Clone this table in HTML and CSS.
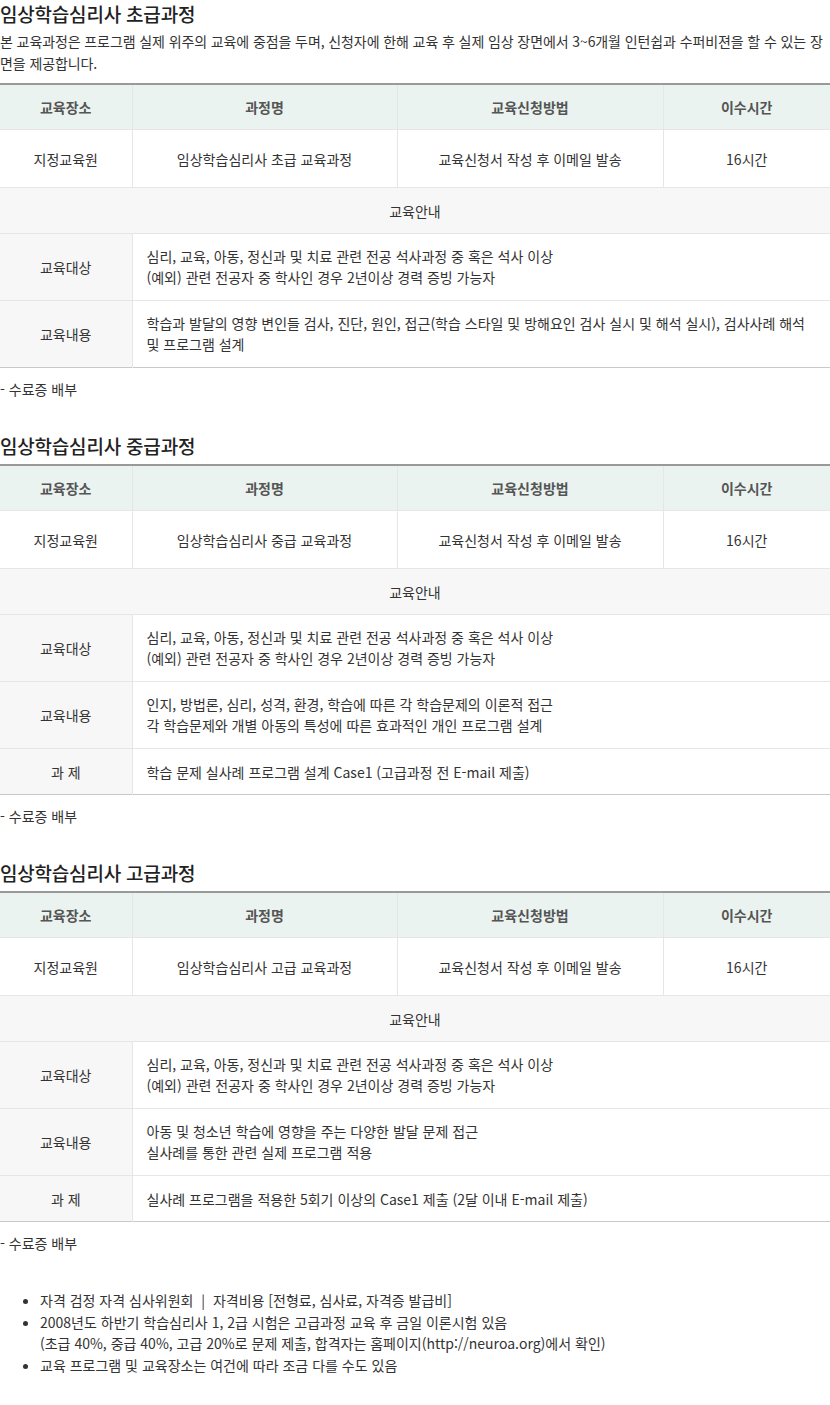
FILE: index.html
```html
<!DOCTYPE html>
<html lang="ko">
<head>
<meta charset="utf-8">
<title>임상학습심리사 교육과정</title>
<link rel="stylesheet" href="styles.css">
</head>
<body>
<section class="course">
  <h2 class="course-title">임상학습심리사 초급과정</h2>
  <p class="course-desc">본 교육과정은 프로그램 실제 위주의 교육에 중점을 두며, 신청자에 한해 교육 후 실제 임상 장면에서 3~6개월 인턴쉽과 수퍼비젼을 할 수 있는 장면을 제공합니다.</p>
  <table class="course-table">
    <colgroup><col class="c1"><col class="c2"><col class="c3"><col class="c4"></colgroup>
    <thead>
      <tr><th>교육장소</th><th>과정명</th><th>교육신청방법</th><th>이수시간</th></tr>
    </thead>
    <tbody>
      <tr class="row-data"><td>지정교육원</td><td>임상학습심리사 초급 교육과정</td><td>교육신청서 작성 후 이메일 발송</td><td>16시간</td></tr>
      <tr class="row-guide"><td colspan="4">교육안내</td></tr>
      <tr class="row-info"><td class="label">교육대상</td><td colspan="3" class="text">심리, 교육, 아동, 정신과 및 치료 관련 전공 석사과정 중 혹은 석사 이상<br>(예외) 관련 전공자 중 학사인 경우 2년이상 경력 증빙 가능자</td></tr>
      <tr class="row-info"><td class="label">교육내용</td><td colspan="3" class="text">학습과 발달의 영향 변인들 검사, 진단, 원인, 접근(학습 스타일 및 방해요인 검사 실시 및 해석 실시), 검사사례 해석 및 프로그램 설계</td></tr>
    </tbody>
  </table>
  <p class="course-note">- 수료증 배부</p>
</section>

<section class="course">
  <h2 class="course-title">임상학습심리사 중급과정</h2>
  <table class="course-table">
    <colgroup><col class="c1"><col class="c2"><col class="c3"><col class="c4"></colgroup>
    <thead>
      <tr><th>교육장소</th><th>과정명</th><th>교육신청방법</th><th>이수시간</th></tr>
    </thead>
    <tbody>
      <tr class="row-data"><td>지정교육원</td><td>임상학습심리사 중급 교육과정</td><td>교육신청서 작성 후 이메일 발송</td><td>16시간</td></tr>
      <tr class="row-guide"><td colspan="4">교육안내</td></tr>
      <tr class="row-info"><td class="label">교육대상</td><td colspan="3" class="text">심리, 교육, 아동, 정신과 및 치료 관련 전공 석사과정 중 혹은 석사 이상<br>(예외) 관련 전공자 중 학사인 경우 2년이상 경력 증빙 가능자</td></tr>
      <tr class="row-info"><td class="label">교육내용</td><td colspan="3" class="text">인지, 방법론, 심리, 성격, 환경, 학습에 따른 각 학습문제의 이론적 접근<br>각 학습문제와 개별 아동의 특성에 따른 효과적인 개인 프로그램 설계</td></tr>
      <tr class="row-task"><td class="label">과 제</td><td colspan="3" class="text">학습 문제 실사례 프로그램 설계 Case1 (고급과정 전 E-mail 제출)</td></tr>
    </tbody>
  </table>
  <p class="course-note">- 수료증 배부</p>
</section>

<section class="course">
  <h2 class="course-title">임상학습심리사 고급과정</h2>
  <table class="course-table">
    <colgroup><col class="c1"><col class="c2"><col class="c3"><col class="c4"></colgroup>
    <thead>
      <tr><th>교육장소</th><th>과정명</th><th>교육신청방법</th><th>이수시간</th></tr>
    </thead>
    <tbody>
      <tr class="row-data"><td>지정교육원</td><td>임상학습심리사 고급 교육과정</td><td>교육신청서 작성 후 이메일 발송</td><td>16시간</td></tr>
      <tr class="row-guide"><td colspan="4">교육안내</td></tr>
      <tr class="row-info"><td class="label">교육대상</td><td colspan="3" class="text">심리, 교육, 아동, 정신과 및 치료 관련 전공 석사과정 중 혹은 석사 이상<br>(예외) 관련 전공자 중 학사인 경우 2년이상 경력 증빙 가능자</td></tr>
      <tr class="row-info"><td class="label">교육내용</td><td colspan="3" class="text">아동 및 청소년 학습에 영향을 주는 다양한 발달 문제 접근<br>실사례를 통한 관련 실제 프로그램 적용</td></tr>
      <tr class="row-task"><td class="label">과 제</td><td colspan="3" class="text">실사례 프로그램을 적용한 5회기 이상의 Case1 제출 (2달 이내 E-mail 제출)</td></tr>
    </tbody>
  </table>
  <p class="course-note">- 수료증 배부</p>
</section>

<ul class="notice">
  <li>자격 검정 자격 심사위원회 &nbsp;|&nbsp; 자격비용 [전형료, 심사료, 자격증 발급비]</li>
  <li>2008년도 하반기 학습심리사 1, 2급 시험은 고급과정 교육 후 금일 이론시험 있음<br>(초급 40%, 중급 40%, 고급 20%로 문제 제출, 합격자는 홈페이지(http://neuroa.org)에서 확인)</li>
  <li>교육 프로그램 및 교육장소는 여건에 따라 조금 다를 수도 있음</li>
</ul>
</body>
</html>
```

FILE: styles.css
```css
html, body {
  margin: 0;
  padding: 0;
  background: #fff;
}
body {
  width: 830px;
  font-family: "Noto Sans CJK KR", "Noto Sans", sans-serif;
  font-size: 14px;
  color: #333;
}
.course {
  margin: 0 0 32px 0;
}
.course-title {
  margin: 0 0 4px 0;
  font-size: 19px;
  line-height: 28px;
  font-weight: 500;
  color: #222;
  letter-spacing: -0.2px;
}
.course-desc {
  margin: -2px 0 9px 0;
  line-height: 22px;
  font-size: 14px;
  color: #333;
  word-break: break-all;
  letter-spacing: -0.1px;
}
.course-table {
  width: 830px;
  border-collapse: collapse;
  table-layout: fixed;
  border-top: 2px solid #999;
  border-bottom: 1px solid #c8c8c8;
}
.c1 { width: 132px; }
.c2 { width: 265px; }
.c3 { width: 266px; }
.c4 { width: 167px; }
.course-table th,
.course-table td {
  border: 1px solid #e6e6e6;
  padding: 0;
  text-align: center;
  vertical-align: middle;
  font-size: 14px;
  color: #333;
}
.course-table tr > :first-child { border-left: none; }
.course-table tr > :last-child { border-right: none; }
.course-table thead tr:first-child th { border-top: none; }
.course-table tbody tr:last-child td { border-bottom: none; }
.course-table th {
  height: 44px;
  background: #ebf3f0;
  font-weight: 700;
  color: #555;
}
.row-data td {
  height: 57px;
}
.row-guide td {
  height: 45px;
  background: #f7f7f7;
}
.row-info td {
  height: 66px;
  line-height: 21px;
}
.row-task td {
  height: 45px;
}
.course-table td.label {
  background: #f7f7f7;
}
.course-table td.text {
  text-align: left;
  padding: 0 14px;
}
.course-note {
  margin: 10px 0 0 0;
  line-height: 22px;
  font-size: 14px;
  color: #333;
}
.notice {
  margin: 0;
  padding: 4px 0 0 40px;
  font-size: 14px;
  line-height: 21.5px;
  color: #333;
}
.notice li {
  margin: 0;
}
```
